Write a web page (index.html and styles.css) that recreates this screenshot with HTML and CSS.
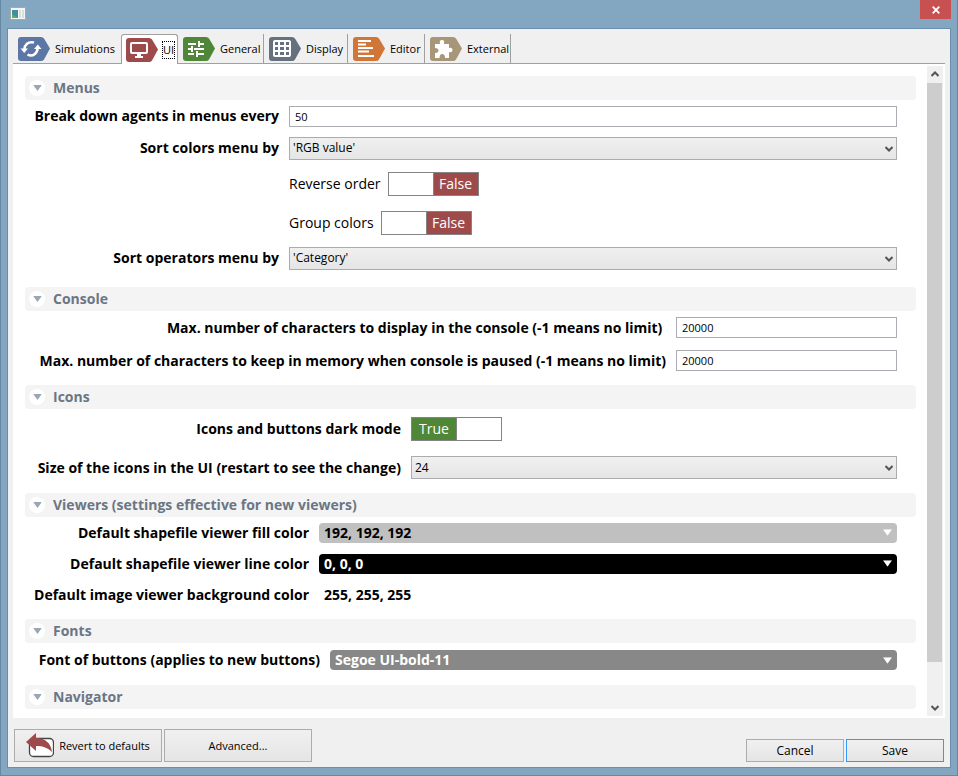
FILE: index.html
```html
<!DOCTYPE html>
<html lang="en">
<head>
<meta charset="utf-8">
<title>Preferences</title>
<link rel="stylesheet" href="styles.css">
</head>
<body>
<svg class="defs" aria-hidden="true">
  <symbol id="tag" viewBox="0 0 32 24"><path d="M3 0H23Q25 0 26 1.500L32 11.500L26 22.500Q25 24 23 24H3Q0 24 0 21V3Q0 0 3 0Z"/></symbol>
  <symbol id="chevron" viewBox="0 0 8 6"><path d="M0.500 1L4 4.500L7.500 1" fill="none" stroke="#555" stroke-width="2"/></symbol>
  <symbol id="triangle" viewBox="0 0 10 7"><path d="M0 0H10L5 7Z"/></symbol>
</svg>
<div class="window">
  <header class="titlebar">
    <svg class="app-icon" viewBox="0 0 16 13"><rect x=".5" y=".5" width="15" height="12" rx="1" fill="#f5f5f5" stroke="#a7a7a7"/><rect x="2" y="3" width="6" height="8" fill="#3f8fa0"/><path d="M2 11V7L8 11Z" fill="#54ad73"/><rect x="9" y="3" width="2" height="8" fill="#ddd"/><rect x="12" y="3" width="2" height="8" fill="#cfe3d8"/></svg>
    <button class="close" aria-label="Close"><svg viewBox="0 0 8 8"><path d="M.7.7L7.300 7.300M7.300.7L.7 7.300" stroke="#fff" stroke-width="1.800"/></svg></button>
  </header>
  <main class="client">
    <nav class="tabs" role="tablist">
      <button class="tab tab-sim" role="tab">
        <svg class="tab-icon blue" viewBox="0 0 32 24"><use href="#tag"/><g fill="none" stroke="#fff" stroke-width="2.500"><path d="M16 5.500C10 4 6.500 8 6.200 13M9.500 17.500C15 20.500 19.500 16 19.800 10.500"/></g><path d="M2.500 11.500H10L6.200 16ZM16 12H23.500L19.800 7.500Z" fill="#fff"/></svg>Simulations</button>
      <button class="tab tab-ui active" role="tab" aria-selected="true">
        <svg class="tab-icon red" viewBox="0 0 32 24"><use href="#tag"/><rect x="5" y="5" width="16" height="10" rx="1" fill="none" stroke="#fff" stroke-width="2"/><path d="M11 16H15V18H17V20H9V18H11Z" fill="#fff"/></svg><span class="focus">UI</span></button>
      <button class="tab tab-general" role="tab">
        <svg class="tab-icon green" viewBox="0 0 32 24"><use href="#tag"/><path d="M5 7H13M17 7H21M16 4V10M5 12H8M11 12H21M9 9V15M5 17H11M15 17H21M14 14V20" fill="none" stroke="#fff" stroke-width="2"/></svg>General</button>
      <button class="tab tab-display" role="tab">
        <svg class="tab-icon slate" viewBox="0 0 32 24"><use href="#tag"/><rect x="4" y="3" width="18" height="17" rx="2" fill="#fff"/><path d="M6 5h3v3H6zM11 5h4v3h-4zM17 5h3v3h-3zM6 10h3v3H6zM11 10h4v3h-4zM17 10h3v3h-3zM6 15h3v3H6zM11 15h4v3h-4zM17 15h3v3h-3z"/></svg>Display</button>
      <button class="tab tab-editor" role="tab">
        <svg class="tab-icon orange" viewBox="0 0 32 24"><use href="#tag"/><path d="M5 4H18M5 7.500H13M5 11H20M5 14.500H16M5 19H21" fill="none" stroke="#fff" stroke-width="2"/></svg>Editor</button>
      <button class="tab tab-external" role="tab">
        <svg class="tab-icon tan" viewBox="0 0 32 24"><use href="#tag"/><path d="M5 7H10Q9 3 12 3Q15 3 14 7H19V11Q22.500 10 22.500 13Q22.500 16 19 15V21H15Q15 17 12.200 17Q9.500 17 9.500 21H5V16Q8.500 16 8.500 13.500Q8.500 11 5 11Z" fill="#fff"/></svg>External</button>
    </nav>
    <div class="panel">
      <div class="content">
        <section class="group menus">
          <h2 class="heading"><button class="twisty" aria-label="Collapse Menus"><svg viewBox="0 0 10 7"><use href="#triangle"/></svg></button>Menus</h2>
          <div class="rows">
            <label class="name" for="agents">Break down agents in menus every</label>
            <input class="field" id="agents" value="50">
            <label class="name" for="sortc">Sort colors menu by</label>
            <div class="combo"><select id="sortc"><option>'RGB value'</option></select><svg viewBox="0 0 8 6"><use href="#chevron"/></svg></div>
            <label class="option">Reverse order <input type="checkbox"><span class="switch"><span class="blank"></span><span class="off">False</span></span></label>
            <label class="option">Group colors <input type="checkbox"><span class="switch"><span class="blank"></span><span class="off">False</span></span></label>
            <label class="name" for="sorto">Sort operators menu by</label>
            <div class="combo"><select id="sorto"><option>'Category'</option></select><svg viewBox="0 0 8 6"><use href="#chevron"/></svg></div>
          </div>
        </section>
        <section class="group console">
          <h2 class="heading"><button class="twisty" aria-label="Collapse Console"><svg viewBox="0 0 10 7"><use href="#triangle"/></svg></button>Console</h2>
          <div class="rows">
            <label class="name" for="maxd">Max. number of characters to display in the console (-1 means no limit)&nbsp;</label>
            <input class="field" id="maxd" value="20000">
            <label class="name" for="maxk">Max. number of characters to keep in memory when console is paused (-1 means no limit)</label>
            <input class="field" id="maxk" value="20000">
          </div>
        </section>
        <section class="group icons">
          <h2 class="heading"><button class="twisty" aria-label="Collapse Icons"><svg viewBox="0 0 10 7"><use href="#triangle"/></svg></button>Icons</h2>
          <div class="rows">
            <label class="name" for="dark">Icons and buttons dark mode</label>
            <label class="option"><input type="checkbox" id="dark" checked><span class="switch"><span class="on">True</span><span class="blank"></span></span></label>
            <label class="name" for="size">Size of the icons in the UI (restart to see the change)</label>
            <div class="combo"><select id="size"><option>24</option></select><svg viewBox="0 0 8 6"><use href="#chevron"/></svg></div>
          </div>
        </section>
        <section class="group viewers">
          <h2 class="heading"><button class="twisty" aria-label="Collapse Viewers"><svg viewBox="0 0 10 7"><use href="#triangle"/></svg></button>Viewers (settings effective for new viewers)</h2>
          <div class="rows">
            <label class="name" for="fill">Default shapefile viewer fill color</label>
            <button class="picker silver" id="fill">192, 192, 192<svg viewBox="0 0 10 7"><use href="#triangle"/></svg></button>
            <label class="name" for="line">Default shapefile viewer line color</label>
            <button class="picker black" id="line">0, 0, 0<svg viewBox="0 0 10 7"><use href="#triangle"/></svg></button>
            <label class="name" for="bg">Default image viewer background color</label>
            <button class="picker white" id="bg">255, 255, 255</button>
          </div>
        </section>
        <section class="group fonts">
          <h2 class="heading"><button class="twisty" aria-label="Collapse Fonts"><svg viewBox="0 0 10 7"><use href="#triangle"/></svg></button>Fonts</h2>
          <div class="rows">
            <label class="name" for="font">Font of buttons (applies to new buttons)</label>
            <button class="picker gray" id="font">Segoe UI-bold-11<svg viewBox="0 0 10 7"><use href="#triangle"/></svg></button>
          </div>
        </section>
        <section class="group">
          <h2 class="heading"><button class="twisty" aria-label="Expand Navigator"><svg viewBox="0 0 10 7"><use href="#triangle"/></svg></button>Navigator</h2>
        </section>
      </div>
      <div class="scrollbar">
        <button class="arrow up" aria-label="Scroll up"><svg viewBox="0 0 8 6"><use href="#chevron"/></svg></button>
        <div class="track"><div class="thumb"></div></div>
        <button class="arrow" aria-label="Scroll down"><svg viewBox="0 0 8 6"><use href="#chevron"/></svg></button>
      </div>
    </div>
    <footer class="footer">
      <button class="btn large"><svg class="revert" viewBox="0 0 28 25"><rect x="3.500" y="5.500" width="24" height="18" rx="4" fill="#fff" stroke="#444" stroke-width="1.300"/><path d="M0 9L10 0V5C19 5 25 10 26 19C21 14 16 13 10 13V18Z" fill="#9e4a4a"/></svg>Revert to defaults</button>
      <button class="btn large">Advanced...</button>
      <span class="spacer"></span>
      <button class="btn">Cancel</button>
      <button class="btn primary">Save</button>
    </footer>
  </main>
</div>
</body>
</html>
```
FILE: styles.css
```css
* { box-sizing: border-box; }
body {
  margin: 0;
  font: 12px/16px "Open Sans", "Noto Sans", sans-serif;
  color: #000;
}
button, input, select { font: inherit; color: inherit; margin: 0; }
button { border: 0; padding: 0; background: none; white-space: nowrap; }
.defs { position: absolute; width: 0; height: 0; }

.window {
  display: flex;
  flex-direction: column;
  min-height: 100vh;
  padding: 0 6px 7px;
  background: #83a6c1;
  border: 1px solid #6688a3;
  border-top: 0;
}
.titlebar { display: flex; justify-content: space-between; height: 28px; }
.app-icon { width: 16px; height: 13px; margin: 7px 0 0 3px; }
.close { width: 31px; height: 19px; background: #c75050; }
.close svg { display: block; width: 8px; height: 8px; margin: 0 auto; }

.client {
  flex: 1;
  display: flex;
  flex-direction: column;
  padding: 5px;
  background: #f0f0f0;
  border: 1px solid #6a8eac;
}
.tabs { display: flex; border-bottom: 1px solid #a0a0a0; padding-right: 1px; }
.tab {
  display: flex;
  align-items: center;
  gap: 5px;
  height: 29px;
  padding-left: 5px;
  border-right: 1px solid #a0a0a0;
  font-size: 11px;
}
.tab-icon { flex: none; width: 32px; height: 24px; }
.tab-sim { width: 108px; border-right: 0; }
.tab-ui { width: 57px; }
.tab-general { width: 86px; }
.tab-display { width: 84px; }
.tab-editor { width: 77px; }
.tab-external { width: 86px; }
.tab.active {
  height: 30px;
  margin-bottom: -1px;
  padding-left: 4px;
  background: #fff;
  border: 1px solid #a0a0a0;
  border-bottom: 0;
  border-radius: 3px 3px 0 0;
}
.focus { outline: 1px dotted #000; }
.blue { fill: #5c76a6; }
.red { fill: #9e4a4a; }
.green { fill: #508637; }
.slate { fill: #65717e; }
.orange { fill: #d07638; }
.tan { fill: #a89679; }

.panel { flex: 1; display: flex; padding: 2px 2px 2px 0; background: #fff; }
.content { flex: 1; padding: 10px 11px 0 12px; }
.group { margin-bottom: 8px; }
.group:last-child { margin-bottom: 7px; }
.heading {
  display: flex;
  align-items: center;
  gap: 8px;
  height: 24px;
  margin: 0;
  padding-left: 4px;
  border-radius: 4px;
  background: #f4f4f4;
  color: #6b7684;
  font-size: 14px;
  line-height: 20px;
  font-weight: 700;
}
.twisty {
  display: flex;
  align-items: center;
  justify-content: center;
  width: 16px;
  height: 16px;
  border-radius: 50%;
  background: #fff;
}
.twisty svg { width: 9px; height: 6px; fill: #9aa6b4; }
.rows {
  display: grid;
  column-gap: 10px;
  align-items: center;
  padding: 0 19px 0 9px;
}
.menus { margin-bottom: 13px; }
.menus .rows { grid-template: 32px 32px 39px 39px 32px / 245px 1fr; }
.console .rows { grid-template: 33px 33px / 632px 1fr; }
.icons .rows { grid-template: 40px 37px / 367px 1fr; }
.icons { margin-bottom: 7px; }
.viewers .rows { grid-template: 31px 31px 32px / 275px 1fr; }
.fonts .rows { grid-template: 34px / 286px 1fr; }

.name {
  justify-self: end;
  white-space: nowrap;
  font-size: 14px;
  line-height: 20px;
  font-weight: 700;
}
.field {
  width: 100%;
  min-width: 0;
  height: 21px;
  padding: 0 5px;
  border: 1px solid #abadb3;
  background: #fff;
  font-size: 11px;
}
.combo { position: relative; }
.combo select {
  display: block;
  appearance: none;
  width: 100%;
  height: 23px;
  padding: 0 3px;
  border: 1px solid #acacac;
  border-radius: 0;
  background: linear-gradient(#f0f0f0, #e5e5e5);
}
.combo svg { position: absolute; right: 4px; top: 9px; width: 8px; height: 6px; }

.option {
  grid-column: 2;
  display: flex;
  align-items: center;
  gap: 7px;
  font-size: 14px;
  line-height: 22px;
}
.option input { position: absolute; opacity: 0; }
.switch {
  display: flex;
  width: 91px;
  height: 24px;
  border: 1px solid #848484;
  background: #fff;
  color: #fff;
}
.switch span { flex: 1; text-align: center; }
.off { background: #9e4a4a; border-left: 1px solid #848484; }
.on { background: #508637; border-right: 1px solid #848484; }

.picker {
  display: flex;
  align-items: center;
  justify-content: space-between;
  height: 20px;
  padding: 0 5px;
  border-radius: 4px;
  font-size: 14px;
  line-height: 20px;
  font-weight: 700;
}
.picker svg { width: 9px; height: 7px; fill: #fff; }
.silver { background: #c0c0c0; }
.black { background: #000; color: #fff; }
.white { background: #fff; }
.gray { background: #888; color: #fff; }

.scrollbar { display: flex; flex-direction: column; width: 16px; background: #f0f0f0; }
.arrow { display: flex; align-items: center; justify-content: center; height: 17px; }
.arrow svg { width: 8px; height: 6px; }
.up { transform: rotate(180deg); }
.track { flex: 1; }
.thumb { width: 15px; height: 94%; background: #cdcdcd; }

.footer { display: flex; align-items: flex-end; gap: 2px; padding: 11px 1px 0; }
.spacer { flex: 1; }
.btn {
  display: flex;
  align-items: center;
  justify-content: center;
  gap: 5px;
  width: 98px;
  height: 23px;
  border: 1px solid #acacac;
  background: linear-gradient(#f0f0f0, #e5e5e5);
}
.large { width: 148px; height: 33px; font-size: 11px; }
.primary { border-color: #3399ff; }
.revert { width: 28px; height: 25px; }
```
